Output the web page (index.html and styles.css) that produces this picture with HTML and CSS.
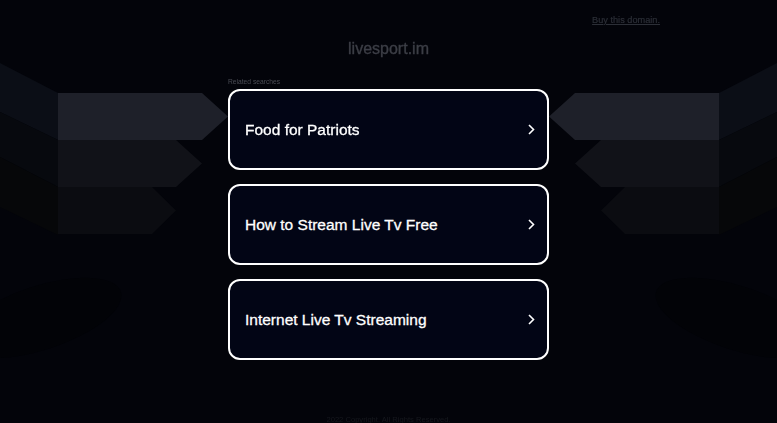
FILE: index.html
```html
<!DOCTYPE html>
<html lang="en">
<head>
<meta charset="UTF-8">
<title>livesport.im</title>
<link rel="stylesheet" href="styles.css">
</head>
<body>

<!-- Decorative backdrop -->
<svg class="backdrop" width="777" height="423" viewBox="0 0 777 423" aria-hidden="true">
    <defs>
        <g id="wing">
            <ellipse cx="40" cy="318" rx="85" ry="32" fill="#020307" transform="rotate(-18 40 318)"/>
            <polygon points="0,63 58,93 58,140 0,112" fill="#0b0e16"/>
            <polygon points="0,112 58,140 58,187 0,157" fill="#07090e"/>
            <polygon points="0,157 58,187 58,235 0,207" fill="#060709"/>
            <polygon points="58,93 202,93 228,116.5 202,140 58,140" fill="#1e2029"/>
            <polygon points="58,140 176,140 202,163.5 176,187 58,187" fill="#111218"/>
            <polygon points="58,187 152,187 176,210.5 152,234 58,234" fill="#0b0c11"/>
        </g>
    </defs>
    <use href="#wing"/>
    <use href="#wing" transform="translate(777 0) scale(-1 1)"/>
</svg>

<div class="page">
    <div class="domain-bar">
        <a href="#" class="buy-link">Buy this domain.</a>
    </div>

    <h1 class="domain-name">livesport.im</h1>

    <div class="related">
        <p class="related-title">Related searches</p>
        <a href="#" class="search-card">
            <span>Food for Patriots</span>
            <svg class="chevron" width="7" height="11" viewBox="0 0 7 11"><path d="M1 1 L5.5 5.5 L1 10" /></svg>
        </a>
        <a href="#" class="search-card">
            <span>How to Stream Live Tv Free</span>
            <svg class="chevron" width="7" height="11" viewBox="0 0 7 11"><path d="M1 1 L5.5 5.5 L1 10" /></svg>
        </a>
        <a href="#" class="search-card">
            <span>Internet Live Tv Streaming</span>
            <svg class="chevron" width="7" height="11" viewBox="0 0 7 11"><path d="M1 1 L5.5 5.5 L1 10" /></svg>
        </a>
    </div>

    <p class="footer">2022 Copyright. All Rights Reserved.</p>
</div>

</body>
</html>
```

FILE: styles.css
```css
/* Page base */
html, body {
    margin: 0;
    padding: 0;
    height: 100%;
    overflow: hidden;
    background-color: #03040a;
    font-family: "Liberation Sans", Arial, sans-serif;
}

/* Background wings, sit behind everything */
.backdrop {
    position: fixed;
    top: 0;
    left: 0;
    z-index: 0;
}

.page {
    position: relative;
    z-index: 1;
}

/* Top link */
.domain-bar {
    display: flex;
    justify-content: flex-end;
    padding: 15px 117px 0 0;
    line-height: 11px;
}

.buy-link {
    color: #2c2f37;
    font-size: 9.2px;
    text-decoration: underline;
    -webkit-text-stroke: 0.2px #2c2f37;
}

/* Domain title */
.domain-name {
    margin: 13px 0 0;
    font-size: 16px;
    font-weight: normal;
    line-height: 20px;
    text-align: center;
    color: #3c3e46;
    -webkit-text-stroke: 0.35px #3c3e46;
}

/* Related searches block */
.related {
    width: 321px;
    margin: 18px auto 0;
    display: flex;
    flex-direction: column;
    gap: 14px;
}

.related-title {
    margin: 0 0 -11px;
    font-size: 6.7px;
    line-height: 9px;
    color: #4a4c54;
}

.search-card {
    box-sizing: border-box;
    height: 81px;
    display: flex;
    align-items: center;
    justify-content: space-between;
    padding: 0 12px 0 15px;
    background-color: #020515;
    border: 2.5px solid #ffffff;
    border-radius: 12px;
    color: #ffffff;
    font-size: 15.5px;
    text-decoration: none;
    -webkit-text-stroke: 0.3px #ffffff;
}

.chevron path {
    fill: none;
    stroke: #ffffff;
    stroke-width: 1.6;
}

/* Footer */
.footer {
    margin: 56px 0 0;
    font-size: 7.6px;
    line-height: 7px;
    text-align: center;
    color: #16181e;
}
```
